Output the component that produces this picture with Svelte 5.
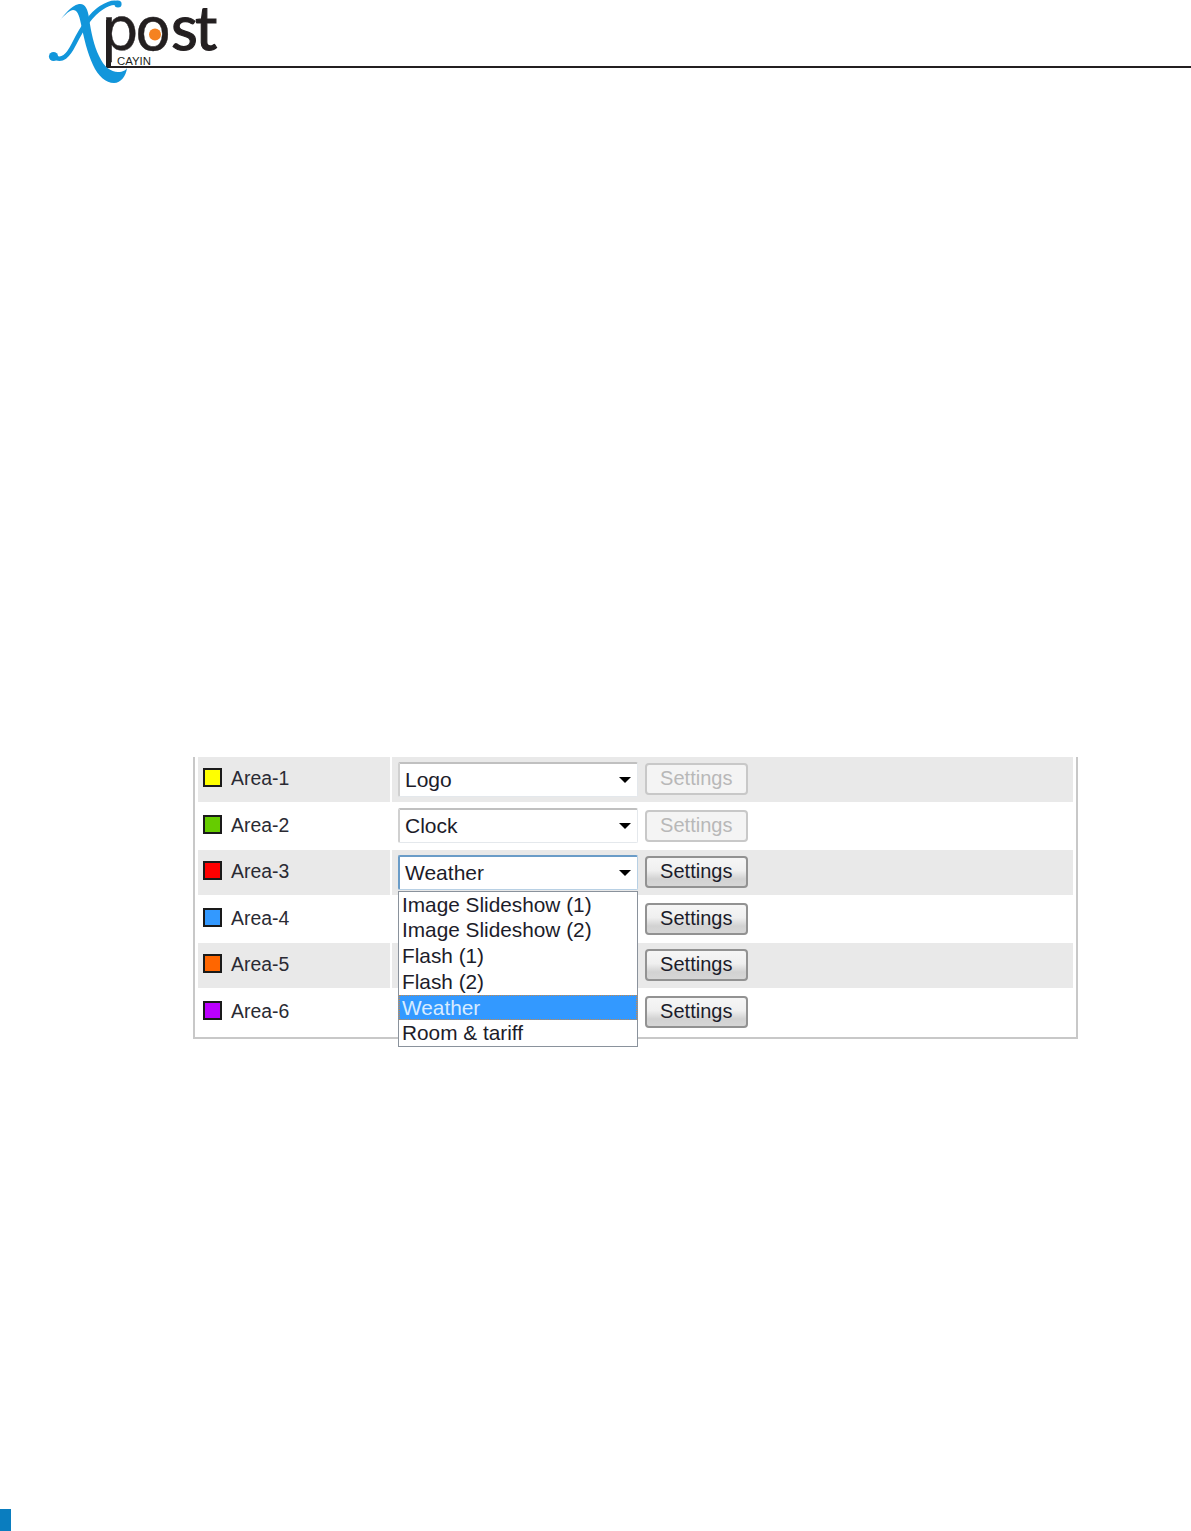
<script>
	const rows = [
		{ name: 'Area-1', color: '#ffff00', value: 'Logo', enabled: false },
		{ name: 'Area-2', color: '#66cc00', value: 'Clock', enabled: false },
		{ name: 'Area-3', color: '#ff0000', value: 'Weather', enabled: true, open: true },
		{ name: 'Area-4', color: '#3399ff', value: '', enabled: true },
		{ name: 'Area-5', color: '#ff6600', value: '', enabled: true },
		{ name: 'Area-6', color: '#bb00ff', value: '', enabled: true }
	];

	const options = ['Image Slideshow (1)', 'Image Slideshow (2)', 'Flash (1)', 'Flash (2)', 'Weather', 'Room & tariff'];
</script>

<div class="page">
	<header class="header">
		<svg class="logo" width="176" height="86" viewBox="0 0 176 86" aria-label="Xpost Cayin">
			<path
				class="swoosh"
				d="M11 21 C17 15 22 6 31 4 C37 3 40 9 41 18 C43 32 46 46 51 56 C56 67 63 72 70 72 C75 72 78 70 79 68 C78 76 73 83 66 83 C58 83 50 76 45 65 C39 52 36 38 33 24 C31 14 29 10 25 10 C20 11 15 17 11 21 Z"
			/>
			<path class="swoosh-thin" d="M6 57 C14 62 20 56 26 44 C33 30 42 15 53 8 C59 4 65 2 69 3" />
			<circle class="swoosh" cx="5.5" cy="56.5" r="4.6" />
			<circle class="swoosh" cx="70" cy="4" r="3.6" />
			<text class="word" y="50"><tspan class="round" x="53">p</tspan><tspan class="round" x="87">o</tspan><tspan class="thin" x="123">s</tspan><tspan class="thin" x="147">t</tspan></text>
			<rect class="stem" x="58" y="20" width="5" height="47" />
			<circle class="dot" cx="107" cy="34.5" r="6" />
			<text class="brand" x="69" y="64.5" textLength="34" lengthAdjust="spacingAndGlyphs">CAYIN</text>
		</svg>
		<div class="rule"></div>
	</header>

	<main class="panel">
		{#each rows as row}
			<div class="row">
				<div class="label">
					<span class="swatch" style="background: {row.color}"></span>
					<span class="name">{row.name}</span>
				</div>
				<div class="controls">
					<div class="select-wrap">
						<div class="select" class:focused={row.open}>
							<span>{row.value}</span>
							<span class="arrow"></span>
						</div>
						{#if row.open}
							<ul class="menu">
								{#each options as option}
									<li class:active={option === row.value}>{option}</li>
								{/each}
							</ul>
						{/if}
					</div>
					<button class="settings" disabled={!row.enabled}>Settings</button>
				</div>
			</div>
		{/each}
	</main>

	<footer class="mark"></footer>
</div>

<style>
	:global(body) {
		margin: 0;
		background: #fff;
	}

	.page {
		height: 1531px;
		display: flex;
		flex-direction: column;
		font-family: 'Liberation Sans', Arial, sans-serif;
		color: #2a2a33;
	}

	.header {
		position: relative;
		height: 68px;
		flex: none;
	}

	.logo {
		position: absolute;
		left: 48px;
		top: 0;
		z-index: 1;
	}

	.swoosh {
		fill: #1296db;
	}

	.swoosh-thin {
		fill: none;
		stroke: #1296db;
		stroke-width: 4.5;
		stroke-linecap: round;
	}

	.word {
		fill: #231f20;
		stroke: #231f20;
	}

	.round {
		font-family: 'DejaVu Sans', sans-serif;
		font-size: 59px;
		stroke-width: 0.4;
	}

	.thin {
		font-family: Lato, sans-serif;
		font-size: 62px;
		stroke-width: 1.2;
	}

	.stem {
		fill: #231f20;
	}

	.dot {
		fill: #f58220;
	}

	.brand {
		font-size: 10px;
		fill: #231f20;
	}

	.rule {
		margin: 66px 0 0 106px;
		height: 2px;
		background: #231f20;
	}

	.panel {
		margin: 689px 0 0 193px;
		width: 885px;
		box-sizing: border-box;
		height: 282px;
		padding: 0 3px;
		border: solid #c8c8c8;
		border-width: 0 2px 2px;
		display: flex;
		flex-direction: column;
		gap: 2px;
		flex: none;
	}

	.row {
		height: 44.5px;
		display: grid;
		grid-template-columns: 192px 1fr;
		gap: 2px;
		flex: none;
	}

	.row:nth-child(odd) > div {
		background: #e9e9e9;
	}

	.label {
		display: flex;
		align-items: center;
		gap: 9px;
		padding: 0 0 3px 5px;
		font-size: 19.4px;
	}

	.name {
		padding-top: 2px;
	}

	.swatch {
		width: 19px;
		height: 19px;
		box-sizing: border-box;
		border: 2px solid #1a1a1a;
	}

	.controls {
		display: flex;
		align-items: center;
		gap: 7px;
		padding-left: 6px;
	}

	.select-wrap {
		position: relative;
		width: 239.5px;
	}

	.select {
		height: 35px;
		box-sizing: border-box;
		display: flex;
		align-items: center;
		justify-content: space-between;
		padding: 0 6px 0 5px;
		background: #fff;
		border: 1px solid #e4e8ec;
		border-top: 2px solid #c0c0c0;
		border-left: 2px solid #d0d0d0;
		border-radius: 2px;
		font-size: 21px;
		color: #1c1c2a;
	}

	.select.focused {
		border-color: #b8d0e4;
		border-top-color: #6a9cc8;
		border-left-color: #6a9cc8;
	}

	.arrow {
		width: 0;
		height: 0;
		border: 6px solid transparent;
		border-top: 6px solid #000;
		border-bottom: 0;
	}

	.menu {
		position: absolute;
		left: 0;
		right: 0;
		top: 100%;
		margin: 1px 0 0;
		padding: 0;
		list-style: none;
		background: #fff;
		border: 1px solid #8a929c;
		box-sizing: border-box;
		z-index: 2;
		font-size: 20.8px;
		color: #1c1c2a;
	}

	.menu li {
		height: 25.7px;
		line-height: 25.7px;
		padding-left: 3px;
		box-sizing: border-box;
	}

	.menu li.active {
		background: #3399ff;
		color: #d8ecff;
		outline: 1px dotted #c8894a;
		outline-offset: -1px;
	}

	.settings {
		width: 103.5px;
		height: 32px;
		padding: 0 0 1px;
		font-family: inherit;
		font-size: 20px;
		color: #1c1c2a;
		background: linear-gradient(#f6f6f6 0%, #efefef 45%, #d2d2d2 75%, #d6d6d6 100%);
		border: 2px solid #929292;
		border-radius: 4px;
	}

	.settings:disabled {
		color: #b8b8b8;
		background: #f4f4f4;
		border-color: #c8c8c8;
	}

	.mark {
		margin-top: auto;
		width: 11px;
		height: 22px;
		background: #0a7dbf;
	}
</style>
